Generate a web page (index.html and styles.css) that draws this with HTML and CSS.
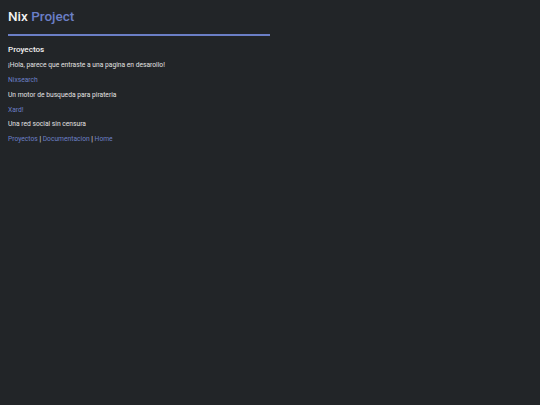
FILE: index.html
```html
<!DOCTYPE html>
<html lang="es">
<head>
<meta charset="utf-8">
<title>Nix Project</title>
<link rel="stylesheet" href="styles.css">
</head>
<body>
<header class="header">
  <h1 class="brand">Nix <span class="accent">Project</span></h1>
</header>
<main class="content">
  <h2 class="section-title">Proyectos</h2>
  <p class="text">¡Hola, parece que entraste a una pagina en desarollo!</p>
  <p class="text"><a class="link" href="#">Nixsearch</a></p>
  <p class="text">Un motor de busqueda para pirateria</p>
  <p class="text"><a class="link" href="#">Xard!</a></p>
  <p class="text">Una red social sin censura</p>
  <p class="text nav"><a class="link" href="#">Proyectos</a> | <a class="link" href="#">Documentacion</a> | <a class="link" href="#">Home</a></p>
</main>
</body>
</html>
```
FILE: styles.css
```css
html, body {
  background: #222528;
}
body {
  margin: 0;
  padding: 8px;
  font-family: Roboto, "Liberation Sans", sans-serif;
  color: #e2e2e2;
}
.header {
  width: 262px;
  border-bottom: 2px solid #6b7fc6;
  padding-bottom: 9px;
}
.brand {
  margin: 0;
  font-size: 13.5px;
  font-weight: 500;
  line-height: 17px;
  color: #f2f2f2;
}
.accent {
  color: #6b7fc6;
}
.content {
  padding-top: 8px;
}
.section-title {
  margin: 0 0 7px;
  font-size: 8.1px;
  font-weight: 500;
  line-height: 10px;
  color: #f2f2f2;
}
.text {
  margin: 0 0 6.85px;
  font-size: 6.7px;
  line-height: 8px;
}
.link {
  color: #6b7fc6;
  text-decoration: none;
}
```
